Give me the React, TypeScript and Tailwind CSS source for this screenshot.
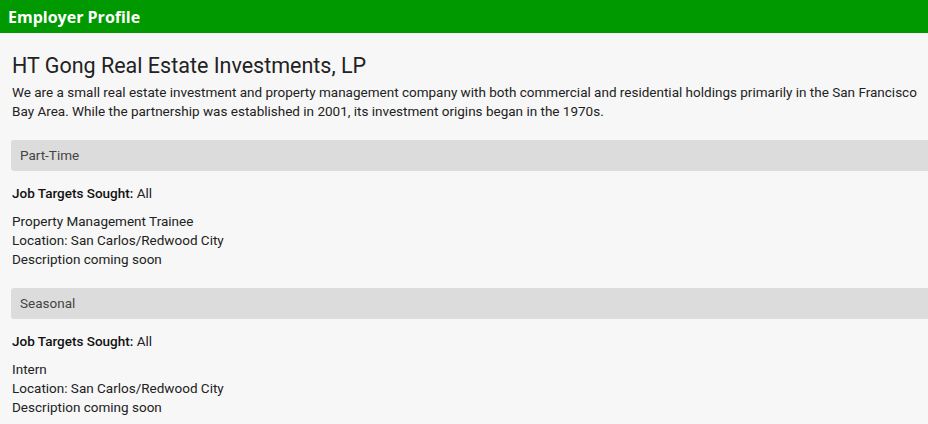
import React from 'react';

type Job = { title: string; location: string; description: string };
type Section = { label: string; targets: string; jobs: Job[] };

const sections: Section[] = [
  {
    label: 'Part-Time',
    targets: 'All',
    jobs: [
      {
        title: 'Property Management Trainee',
        location: 'San Carlos/Redwood City',
        description: 'Description coming soon',
      },
    ],
  },
  {
    label: 'Seasonal',
    targets: 'All',
    jobs: [
      {
        title: 'Intern',
        location: 'San Carlos/Redwood City',
        description: 'Description coming soon',
      },
    ],
  },
];

export default function App() {
  return (
    <div className="min-h-screen bg-[#f7f7f7] text-[#222] font-['Roboto',sans-serif] overflow-hidden">
      <div className="h-[33px] bg-[#009a00] flex items-center px-[8px]">
        <h2 className="text-white font-['Open_Sans',sans-serif] font-bold text-[16px]">Employer Profile</h2>
      </div>

      <div className="pl-[11px] pt-[19px]">
        <h1 className="text-[21.5px] leading-[28px] pl-px mb-[3px]">HT Gong Real Estate Investments, LP</h1>
        <p className="text-[13.5px] leading-[19px] pl-px pr-[8px]">
          We are a small real estate investment and property management company with both commercial and residential holdings primarily in the San Francisco Bay Area. While the partnership was established in 2001, its investment origins began in the 1970s.
        </p>

        {sections.map((s, i) => (
          <div key={s.label} className={i === 0 ? 'mt-[19px]' : 'mt-[19px]'}>
            <div className="h-[31px] bg-[#dcdcdc] rounded-l-[3px] flex items-center pl-[9px] text-[13.5px] text-[#444] w-[1000px]">
              {s.label}
            </div>
            <div className="pl-px pt-[13px] text-[13.5px] leading-[19px]">
              <div>
                <span className="font-medium text-[#111]">Job Targets Sought:</span> {s.targets}
              </div>
              {s.jobs.map((j) => (
                <div key={j.title} className="mt-[9px]">
                  <div>{j.title}</div>
                  <div>Location: {j.location}</div>
                  <div>{j.description}</div>
                </div>
              ))}
            </div>
          </div>
        ))}
      </div>
    </div>
  );
}
